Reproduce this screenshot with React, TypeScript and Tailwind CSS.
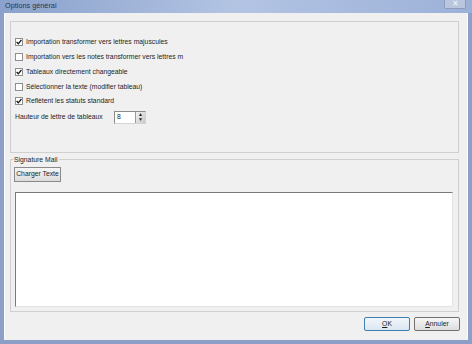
import React from "react";

const options = [
    { label: "Importation transformer vers lettres majuscules", checked: true },
    { label: "Importation vers les notes transformer vers lettres m", checked: false },
    { label: "Tableaux directement changeable", checked: true },
    { label: "Sélectionner la texte (modifier tableau)", checked: false },
    { label: "Reflètent les statuts standard", checked: true },
];

const CheckBox = ({ checked }: { checked: boolean }) => (
    <div className="w-[8px] h-[8px] border border-[#8f8f8f] bg-white flex items-center justify-center shrink-0">
        {checked && (
            <svg width="6" height="6" viewBox="0 0 6 6">
                <path d="M0.6 3 L2.3 4.8 L5.4 1" stroke="#1a1a1a" strokeWidth="1.3" fill="none" />
            </svg>
        )}
    </div>
);

const App = () => {
    return (
        <div
            className="w-[472px] h-[344px] bg-[#8d9fc6] flex flex-col text-[6.8px] text-[#1e1e1e] whitespace-nowrap"
            style={{ fontFamily: '"Liberation Sans", Arial, sans-serif' }}
        >
            {/* barre de titre */}
            <div className="h-[13px] flex items-center justify-between bg-gradient-to-r from-[#8aa1cc] via-[#b3c4e3] to-[#9cb1d9] pl-[5px] pr-[6px]">
                <span className="text-[7.3px] text-[#2a3550]">Options général</span>
                <div className="w-[22px] h-[9px] self-start bg-[#b9c6de] border border-[#8d9cbc] border-t-0 rounded-b-[2px] flex items-center justify-center text-[8px] leading-none text-[#f4f6fa]">
                    ✕
                </div>
            </div>

            <div className="flex-1 mx-[4px] mb-[4px] bg-[#f0f0f0] border-l border-r border-[#fafafa] flex flex-col pt-[8px] pl-[5px] pr-[8px]">
                {/* options */}
                <div className="h-[132px] border border-[#cfcfcf] pt-[13px] pl-[4px] flex flex-col">
                    {options.map((o) => (
                        <div key={o.label} className="h-[14.75px] flex items-center gap-[3px]">
                            <CheckBox checked={o.checked} />
                            <span>{o.label}</span>
                        </div>
                    ))}
                    <div className="h-[15px] mt-[1px] flex items-center">
                        <span className="w-[99px]">Hauteur de lettre de tableaux</span>
                        <div className="w-[32px] h-[13px] bg-white border border-[#8b8b8b] border-r-[#d4d4d4] border-b-[#d4d4d4] flex items-center justify-between pl-[2px]">
                            <span>8</span>
                            <div className="w-[10px] h-[11px] bg-gradient-to-br from-[#f4f4f4] to-[#c8c8c8] border-l border-[#9a9a9a] flex flex-col items-center justify-center text-[5px] leading-[5px]">
                                <span>▲</span>
                                <span>▼</span>
                            </div>
                        </div>
                    </div>
                </div>

                {/* signature */}
                <div className="relative mt-[6px] h-[153px] border border-[#cfcfcf] pt-[7px] pl-[3px] pr-[5px] pb-[4px] flex flex-col">
                    <span className="absolute -top-[5px] left-[3px] bg-[#f0f0f0] pr-[2px] leading-[9px]">
                        Signature Mail
                    </span>
                    <div className="w-[47px] h-[15px] bg-gradient-to-b from-[#f6f6f6] to-[#dcdcdc] border border-[#8a8a8a] flex items-center justify-center">
                        Charger Texte
                    </div>
                    <div className="flex-1 mt-[10px] ml-[1px] bg-white border border-[#7a7a7a] border-r-[#e2e2e2] border-b-[#e2e2e2]" />
                </div>

                {/* boutons */}
                <div className="flex justify-end gap-[4px] mt-[5px] mr-[-1px]">
                    <div className="w-[46px] h-[14px] rounded-[2px] bg-gradient-to-b from-[#f2f6fb] to-[#dce6f2] border border-[#3c7fb1] flex items-center justify-center">
                        <span><u>O</u>K</span>
                    </div>
                    <div className="w-[46px] h-[14px] rounded-[2px] bg-gradient-to-b from-[#f6f6f6] to-[#dddddd] border border-[#707070] flex items-center justify-center">
                        <span><u>A</u>nnuler</span>
                    </div>
                </div>
            </div>
        </div>
    );
};

export default App;
